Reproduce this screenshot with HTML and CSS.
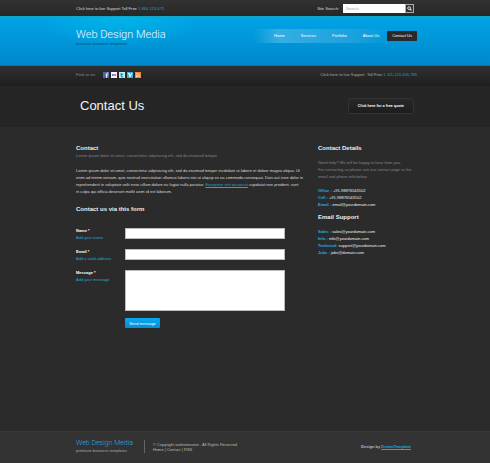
FILE: index.html
```html
<!DOCTYPE html>
<html lang="en">
<head>
<meta charset="utf-8">
<title>Contact Us - Web Design Media</title>
<link rel="stylesheet" href="styles.css">
</head>
<body>
<div class="topbar">
  <div class="wrap row">
    <p>Click here to live Support Toll Free <a class="phone" href="#">1-866-123-675</a></p>
    <form class="search">
      <label for="q">Site Search:</label>
      <input id="q" type="text" placeholder="Search">
      <button type="button" aria-label="Search">
        <svg viewBox="0 0 9 9"><circle cx="4" cy="4" r="1.8" fill="none" stroke="#fff"/><path d="M5.3 5.3 7 7" stroke="#fff" stroke-width="1.3"/></svg>
      </button>
    </form>
  </div>
</div>
<header class="header">
  <div class="wrap row">
    <a class="logo" href="#"><span class="logo-name">Web Design Media</span><span class="logo-tag">premium business templates</span></a>
    <nav class="nav">
      <a href="#">Home</a><a href="#">Services</a><a href="#">Portfolio</a><a href="#">About Us</a><a class="active" href="#">Contact Us</a>
    </nav>
  </div>
</header>
<div class="subbar">
  <div class="wrap row">
    <div class="social">
      <span>Find us on:</span>
      <a href="#" aria-label="Facebook"><svg viewBox="0 0 6 6"><path fill="#4668ae" d="M0 0h6v6H0z"/><path d="M5.4 1H4.6Q3.6 1 3.6 2v4M2.5 3.1h2.6" fill="none" stroke="#fff" stroke-width=".9"/></svg></a>
      <a href="#" aria-label="Flickr"><svg viewBox="0 0 6 6"><path fill="#f4f4fa" d="M0 0h6v6H0z"/><circle cx="1.9" cy="3" r="1.1" fill="#4a78d0"/><circle cx="4.1" cy="3" r="1.1" fill="#ef4a9b"/></svg></a>
      <a href="#" aria-label="Twitter"><svg viewBox="0 0 6 6"><path fill="#c5edf8" d="M0 0h6v6H0z"/><path d="M2.2 1v3q0 .8.8.8h1.2M2.2 2.4h2" fill="none" stroke="#1590c4" stroke-width="1.2"/></svg></a>
      <a href="#" aria-label="Vimeo"><svg viewBox="0 0 6 6"><path fill="#40add2" d="M0 0h6v6H0z"/><path d="M1 1.5h1L3 4.5 4.8 1.3" fill="none" stroke="#fff" stroke-width="1.1"/></svg></a>
      <a href="#" aria-label="RSS"><svg viewBox="0 0 6 6"><path fill="#f18a35" d="M0 0h6v6H0z"/><circle cx="1.6" cy="4.4" r=".6" fill="#fff"/><path d="M1.1 2.7q2.2 0 2.2 2.2M1.1 1.2q3.7 0 3.7 3.7" fill="none" stroke="#ffe5cc" stroke-width=".7"/></svg></a>
    </div>
    <p class="support">Click here to live Support&nbsp; Toll Free <a class="phone" href="#">1-111-123-456-789</a></p>
  </div>
</div>
<div class="title">
  <div class="wrap row">
    <h1>Contact Us</h1>
    <a class="quote" href="#">Click here for a free quote</a>
  </div>
</div>
<main class="wrap main">
  <section class="content">
    <h2>Contact</h2>
    <p class="dim">Lorem ipsum dolor sit amet, consectetur adipisicing elit, sed do eiusmod tempor</p>
    <p class="intro">Lorem ipsum dolor sit amet, consectetur adipisicing elit, sed do eiusmod tempor incididunt ut labore et dolore magna aliqua. Ut<br>enim ad minim veniam, quis nostrud exercitation ullamco laboris nisi ut aliquip ex ea commodo consequat. Duis aut irure dolor in<br>reprehenderit in voluptate velit esse cillum dolore eu fugiat nulla pariatur. <a href="#">Excepteur sint occaecat</a> cupidatat non proident, sunt<br>in culpa qui officia deserunt mollit anim id est laborum.</p>
    <h2>Contact us via this form</h2>
    <form class="form">
      <label for="name"><b>Name *</b><span>Add your name</span></label>
      <input id="name" type="text">
      <label for="email"><b>Email *</b><span>Add a valid address</span></label>
      <input id="email" type="email">
      <label for="message"><b>Message *</b><span>Add your message</span></label>
      <textarea id="message"></textarea>
      <button type="button">Send message</button>
    </form>
  </section>
  <aside class="details">
    <h2>Contact Details</h2>
    <p class="help">Need help? We will be happy to hear from you.<br>For contacting us please use our contact page or the<br>email and phone info below.</p>
    <p><b>Office :</b> +91-98876543102<br><b>Cell :</b> +91-98876543102<br><b>Email :</b> email@yourdomain.com</p>
    <h2>Email Support</h2>
    <p><b>Sales :</b> sales@yourdomain.com<br><b>Info :</b> info@yourdomain.com<br><b>Technical:</b> support@yourdomain.com<br><b>Jobs :</b> jobs@domain.com</p>
  </aside>
</main>
<footer class="footer">
  <div class="wrap row">
    <a class="logo" href="#"><span class="logo-name">Web Design Media</span><span class="logo-tag">premium business templates</span></a>
    <p class="copy">© Copyright websitename . All Rights Reserved<br><a href="#">Home</a> | <a href="#">Contact</a> | <a href="#">RSS</a></p>
    <p class="credit">Design by <a href="#">DreamTemplate</a></p>
  </div>
</footer>
</body>
</html>
```

FILE: styles.css
```css
* { box-sizing: border-box; }
body {
  margin: 0;
  min-height: 100vh;
  display: flex;
  flex-direction: column;
  background: #2b2b2b;
  color: #ddd;
  font: 4px/7px "Liberation Sans", Arial, sans-serif;
}
h1, h2, p { margin: 0; }
a { color: inherit; text-decoration: none; }
input, textarea, button { font: inherit; margin: 0; padding: 0; border: 0; border-radius: 0; }
svg { display: block; }
.wrap { width: 100%; max-width: 338px; margin: 0 auto; }
.row { display: flex; align-items: center; justify-content: space-between; }
.phone { color: #12a0dc; }

.topbar { padding: 3px 0; background: linear-gradient(#323232, #272727); }
.search { display: flex; align-items: center; height: 10px; }
.search label { margin-right: 4px; }
.search input { width: 62px; height: 9px; padding: 0 3px; background: #fff; outline: 0; }
.search input::placeholder { color: #aaa; }
.search button { width: 9px; height: 9px; background: #333; border: 1px solid #aaa; }

.header {
  height: 50px;
  padding-top: 11px;
  background:
    radial-gradient(ellipse 80px 32px at 120px 0, #00c0eb99, transparent),
    linear-gradient(#00a4e6, #0088cb);
  border-top: 1px solid #12a5c8;
  border-bottom: 1px solid #0875b1;
}
.header .row { align-items: flex-start; }
.logo { display: flex; flex-direction: column; white-space: nowrap; }
.logo-name { font: 300 11px/13px Roboto, sans-serif; color: #f0faff; }
.logo-tag { line-height: 5px; }
.header .logo-tag { color: #064873; }
.nav {
  display: flex;
  margin: 1px -3px 0 0;
  height: 14px;
  align-items: center;
  color: #fff;
  background: linear-gradient(90deg, transparent, #35aee3 15%, #1ca1de 60%, transparent 85%);
}
.nav a { padding: 0 8px; line-height: 10px; }
.nav a:first-child { padding-left: 20px; }
.nav .active { padding: 0 5px; background: #292929; border-radius: 1px; }

.subbar { height: 20px; padding-top: 5px; background: linear-gradient(#303030, #1e1e1e); }
.social { display: flex; align-items: center; gap: 2px; color: #8c8c8c; }
.social span { margin-right: 5px; }
.social svg { width: 6px; height: 6px; }
.support { color: #aaa; margin-right: -3px; }

.title { padding: 10px 0; background: #252525; border-bottom: 1px solid #2b2b2b; }
.title .row { padding-left: 4px; height: 21px; align-items: flex-start; }
h1 { font: 13px/20px "Liberation Sans", Arial, sans-serif; color: #f4f4f4; }
.quote {
  margin-top: 2px;
  padding: 0 9px;
  font: 500 4px/14px Roboto, sans-serif;
  color: #fff;
  background: linear-gradient(#282828, #1d1d1d);
  border: 1px solid #333;
  border-radius: 2px;
}

.main { display: flex; flex: 1; justify-content: space-between; padding-top: 16px; }
h2 { font: bold 6px/8px "Liberation Sans", Arial, sans-serif; color: #eee; }
.content { width: 214px; white-space: nowrap; }
.dim, .help { color: #858585; }
.intro { margin: 8px 0 10px; }
.intro a { color: #2aa6d2; text-decoration: underline; }
.form { display: grid; grid-template-columns: 49px 160px; row-gap: 10px; margin-top: 15px; }
.form b, .form span { display: block; }
.form b { color: #fff; }
.form label { height: 11px; margin-top: -1px; }
.form span { color: #2aa6d2; }
.form input, .form textarea { width: 100%; height: 11px; background: #fff; border: 1px solid #bbb; }
.form textarea { height: 41px; resize: none; display: block; }
.form button {
  grid-column: 2;
  width: 35px;
  height: 10px;
  margin-top: -3px;
  color: #fff;
  background: linear-gradient(#0aa9ee, #0090d8);
  border-radius: 1px;
}
.details { width: 96px; white-space: nowrap; color: #f0f0f0; }
.help { margin: 7px 0; }
.details b { color: #20aee0; }
.details h2:not(:first-child) { margin: 5px 0 7px; }

.footer { height: 32px; padding-top: 7px; background: #333; border-top: 1px solid #383838; }
.footer .row { align-items: flex-start; }
.footer .logo { width: 57px; }
.footer .logo-name { font-size: 7px; line-height: 9px; color: #2ca8e4; }
.footer .logo-tag { color: #aaa; }
.copy { margin: 1px 0 0 11px; padding: 2px 0 1px 8px; line-height: 5px; border-left: 1px solid #666; color: #bbb; }
.credit { margin: 4px 3px 0 auto; font-weight: bold; color: #bbb; }
.credit a { color: #26a5d5; text-decoration: underline; }
```
